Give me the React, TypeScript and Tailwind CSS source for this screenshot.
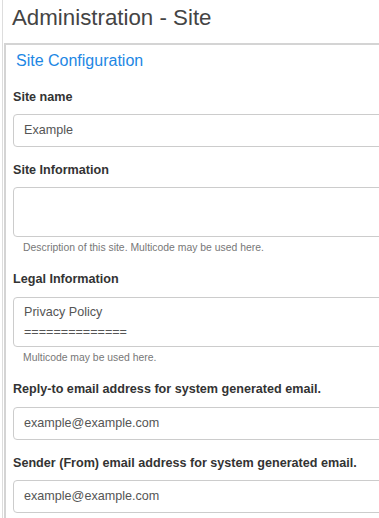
import React from "react";

const Label = ({ children, className = "" }: { children: React.ReactNode; className?: string }) => (
  <div className={`text-[12.6px] font-bold leading-[18px] text-[#333] ${className}`}>{children}</div>
);

const Input = ({ value, className = "" }: { value: string; className?: string }) => (
  <div className={`flex h-[33px] items-center rounded-[4px] border border-[#ccc] bg-white px-[10px] text-[12.6px] text-[#555] ${className}`}>
    {value}
  </div>
);

export default function App() {
  return (
    <div
      className="h-[518px] w-[379px] overflow-hidden bg-white"
      style={{ fontFamily: '"Liberation Sans", Arial, sans-serif' }}
    >
      <div className="ml-[2px] h-full w-[440px] border-l border-[#ddd]">
        <h1 className="pl-[9px] pt-[6px] text-[22.3px] leading-[24px] text-[#444] mb-[13px]">Administration - Site</h1>
        <div className="ml-[1px] h-full border-l-2 border-t-2 border-[#d4d4d4] pl-[7px] pr-[40px]">
          <h2 className="ml-[3px] mt-[6px] text-[16px] leading-[20px] text-[#1d87e4]">Site Configuration</h2>

          <Label className="mt-[17px] mb-[8px]">Site name</Label>
          <Input value="Example" />

          <Label className="mt-[14px] mb-[8px]">Site Information</Label>
          <div className="h-[50px] rounded-[4px] border border-[#ccc] bg-white" />
          <div className="ml-[10px] mt-[4px] text-[10.4px] leading-[14px] text-[#777]">
            Description of this site. Multicode may be used here.
          </div>

          <Label className="mt-[15px] mb-[9px]">Legal Information</Label>
          <div className="h-[50px] rounded-[4px] border border-[#ccc] bg-white px-[10px] pt-[4px] text-[12.6px] leading-[20px] text-[#555]">
            <div>Privacy Policy</div>
            <div>==============</div>
          </div>
          <div className="ml-[10px] mt-[4px] text-[10.4px] leading-[14px] text-[#777]">Multicode may be used here.</div>

          <Label className="mt-[15px] mb-[9px]">Reply-to email address for system generated email.</Label>
          <Input value="example@example.com" />

          <Label className="mt-[14px] mb-[8px]">Sender (From) email address for system generated email.</Label>
          <Input value="example@example.com" />
        </div>
      </div>
    </div>
  );
}
